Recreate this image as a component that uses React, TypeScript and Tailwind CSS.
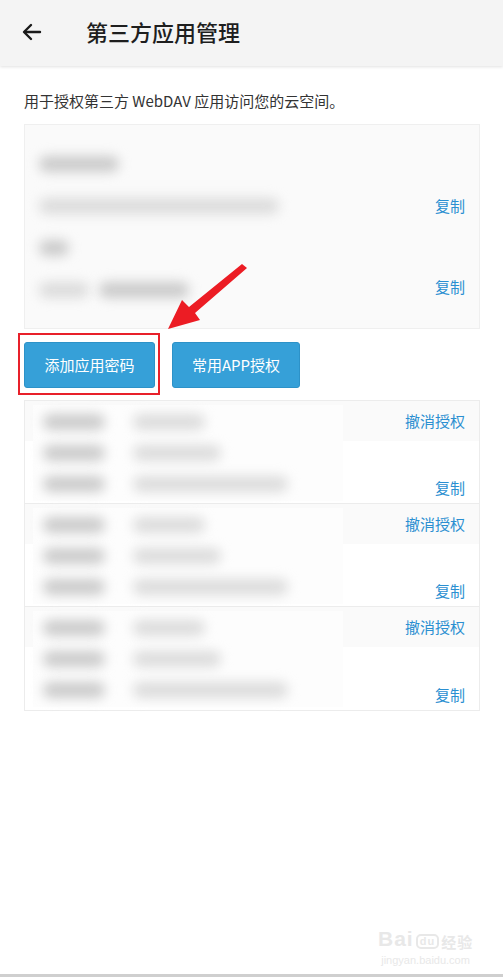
import React from "react";

const font = { fontFamily: '"Noto Sans CJK SC", "Noto Sans", sans-serif' };

function Bar({ w, ml = 0, dark = false }: { w: number; ml?: number; dark?: boolean }) {
  return (
    <div
      className={`h-[16px] rounded-full blur-[6px] ${dark ? "bg-[#cbcbcb]" : "bg-[#dcdcdc]"}`}
      style={{ width: w, marginLeft: ml }}
    />
  );
}

function Item({ last = false }: { last?: boolean }) {
  return (
    <div className={`relative h-[103px] ${last ? "" : "border-b border-[#ececec]"}`}>
      <div className="h-[40px] bg-[#fafafa] flex items-center justify-end pr-[14px]">
        <span className="text-[15px] text-[#2b8fd1]">撤消授权</span>
      </div>
      <div className="absolute left-[8px] top-[4px] w-[310px] h-[96px] bg-[#fdfdfd] flex flex-col justify-around py-[2px] pl-[10px]">
        <div className="flex items-center gap-[28px]">
          <Bar w={62} dark />
          <Bar w={72} />
        </div>
        <div className="flex items-center gap-[28px]">
          <Bar w={62} dark />
          <Bar w={88} />
        </div>
        <div className="flex items-center gap-[28px]">
          <Bar w={62} dark />
          <Bar w={155} />
        </div>
      </div>
      <div className="absolute right-[14px] bottom-[4px] text-[15px] text-[#2b8fd1]">复制</div>
    </div>
  );
}

export default function App() {
  return (
    <div className="relative w-[503px] h-[977px] bg-white overflow-hidden" style={font}>
      <div className="h-[66px] bg-[#f4f4f4] shadow-[0_1px_3px_rgba(0,0,0,0.12)] flex items-center">
        <svg width="24" height="24" viewBox="0 0 24 24" className="ml-[20px] -mt-[2px]" fill="none" stroke="#1a1a1a" strokeWidth="2.4" strokeLinecap="round" strokeLinejoin="round">
          <path d="M20 12H5" />
          <path d="M11 5l-7 7 7 7" />
        </svg>
        <div className="ml-[42px] -mt-[4px] text-[22px] text-[#1e1e1e] font-medium">第三方应用管理</div>
      </div>

      <div className="px-[24px] pr-[23px]">
        <div className="mt-[24px] text-[15px] text-[#333] leading-[22px]">用于授权第三方 WebDAV 应用访问您的云空间。</div>

        <div className="mt-[12px] h-[205px] bg-[#fafafa] border border-[#efefef] relative">
          <div className="absolute left-[10px] top-[18px] w-[290px] h-[168px] flex flex-col justify-around pl-[4px]">
            <Bar w={80} dark />
            <Bar w={240} />
            <Bar w={30} dark />
            <div className="flex items-center">
              <Bar w={50} />
              <Bar w={90} ml={10} dark />
            </div>
          </div>
          <div className="absolute right-[14px] top-[70px] text-[15px] text-[#2b8fd1]">复制</div>
          <div className="absolute right-[14px] top-[151px] text-[15px] text-[#2b8fd1]">复制</div>
        </div>

        <div className="mt-[13px] flex gap-[17px]">
          <div className="relative">
            <div className="w-[131px] h-[46px] rounded-[3px] bg-[#36a0d8] border border-[#2d92c8] flex items-center justify-center text-white text-[15px]">添加应用密码</div>
            <div className="absolute -left-[6px] -top-[9px] w-[142px] h-[62px] border-2 border-[#e8202a]" />
          </div>
          <div className="w-[128px] h-[46px] rounded-[3px] bg-[#36a0d8] border border-[#2d92c8] flex items-center justify-center text-white text-[15px]">常用APP授权</div>
        </div>

        <div className="mt-[12px] border border-[#ececec]">
          <Item />
          <Item />
          <Item last />
        </div>
      </div>

      <svg className="absolute left-0 top-0 pointer-events-none" width="503" height="977">
        <polygon points="168,329 182,300 189,307 242,264 247,268 195,313 200,320" fill="#ec1c24" />
      </svg>

      <div className="absolute left-[378px] top-[928px] flex flex-col items-center text-[#e8e8e8] select-none" style={{ fontFamily: '"Liberation Sans", sans-serif' }}>
        <div className="flex items-end text-[21px] font-bold leading-none tracking-[1px]">
          <span>Bai</span>
          <span className="text-[11px] border-2 border-[#e8e8e8] rounded-[5px] px-[2px] mx-[2px]">du</span>
          <span className="text-[15px]" style={font}>经验</span>
        </div>
        <div className="text-[11px] mt-[3px]">jingyan.baidu.com</div>
      </div>
      <div className="absolute left-0 bottom-0 w-full h-[3px] bg-[#cfcfcf]" />
    </div>
  );
}
